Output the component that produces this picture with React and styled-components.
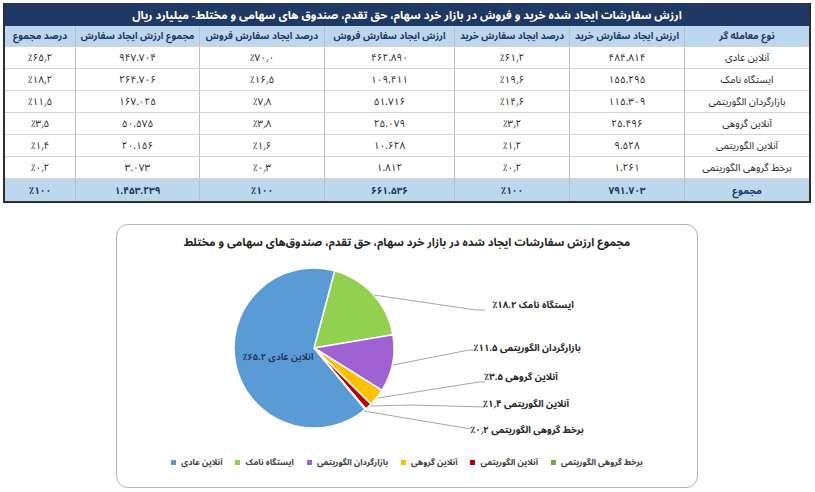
import React from "react";
import styled, { createGlobalStyle } from "styled-components";

const GlobalStyle = createGlobalStyle`
  body {
    margin: 0;
    background: #ffffff;
    font-family: "Noto Sans Arabic", "DejaVu Sans", sans-serif;
  }
`;

// Table
const Page = styled.div`
  width: 815px;
  padding: 3px 4px 0 3px;
  box-sizing: border-box;
`;

const Table = styled.div`
  direction: rtl;
  border: 2px solid #2e2e2e;
  border-top: none;
`;

const TitleBar = styled.div`
  height: 23px;
  background: #1f3864;
  color: #ffffff;
  font-size: 11.3px;
  font-weight: bold;
  display: flex;
  align-items: center;
  justify-content: center;
`;

const Row = styled.div`
  display: grid;
  grid-template-columns: 125px 115px 115px 130px 125px 124px 70px;
  height: ${({ $h }) => $h}px;
  box-sizing: border-box;
  background: ${({ $shade }) => ($shade ? "#bdd7ee" : "#ffffff")};
  border-bottom: ${({ $last }) => ($last ? "none" : "1px solid #d4d4d4")};
`;

const Cell = styled.div`
  display: flex;
  align-items: center;
  justify-content: center;
  min-width: 0;
  border-left: 1px solid #bfbfbf;
  font-size: ${({ $head }) => ($head ? "9.6px" : "10px")};
  font-weight: ${({ $bold }) => ($bold ? "bold" : "normal")};
  color: ${({ $bold }) => ($bold ? "#1f3864" : "#262626")};
  white-space: nowrap;

  &:last-child {
    border-left: none;
  }
`;

const Num = styled.bdi`
  display: inline-block;
  direction: ltr;
  unicode-bidi: isolate;
  text-align: center;
`;

// Chart
const ChartBox = styled.div`
  width: 582px;
  height: 264px;
  box-sizing: border-box;
  margin: 21px auto 0;
  border: 1.5px solid #a9b6c5;
  border-radius: 12px;
  display: flex;
  flex-direction: column;
  align-items: center;
`;

const ChartTitle = styled.div`
  margin-top: 9px;
  direction: rtl;
  font-size: 11.2px;
  font-weight: bold;
  line-height: 18px;
  color: #262626;
`;

const Plot = styled.svg`
  display: block;
  margin-top: 3px;
  font-family: "Noto Sans Arabic", "DejaVu Sans", sans-serif;
`;

const Legend = styled.div`
  margin-top: 8px;
  display: flex;
  align-items: center;
  gap: 13px;
  line-height: 14px;
`;

const LegendItem = styled.div`
  display: flex;
  align-items: center;
  gap: 5px;
  font-size: 8.4px;
  font-weight: bold;
  color: #404040;
  direction: rtl;
`;

const Swatch = styled.span`
  width: 5px;
  height: 5px;
  background: ${({ $c }) => $c};
`;

const header = [
  "نوع معامله گر",
  "ارزش ایجاد سفارش خرید",
  "درصد ایجاد سفارش خرید",
  "ارزش ایجاد سفارش فروش",
  "درصد ایجاد سفارش فروش",
  "مجموع ارزش ایجاد سفارش",
  "درصد مجموع",
];

const rows = [
  ["آنلاین عادی", "۴۸۴.۸۱۴", "٪۶۱٫۲", "۴۶۲.۸۹۰", "٪۷۰٫۰", "۹۴۷.۷۰۴", "٪۶۵٫۲"],
  ["ایستگاه نامک", "۱۵۵.۲۹۵", "٪۱۹٫۶", "۱۰۹.۴۱۱", "٪۱۶٫۵", "۲۶۴.۷۰۶", "٪۱۸٫۲"],
  ["بازارگردان الگوریتمی", "۱۱۵.۳۰۹", "٪۱۴٫۶", "۵۱.۷۱۶", "٪۷٫۸", "۱۶۷.۰۲۵", "٪۱۱٫۵"],
  ["آنلاین گروهی", "۲۵.۴۹۶", "٪۳٫۲", "۲۵.۰۷۹", "٪۳٫۸", "۵۰.۵۷۵", "٪۳٫۵"],
  ["آنلاین الگوریتمی", "۹.۵۲۸", "٪۱٫۲", "۱۰.۶۲۸", "٪۱٫۶", "۲۰.۱۵۶", "٪۱٫۴"],
  ["برخط گروهی الگوریتمی", "۱.۲۶۱", "٪۰٫۲", "۱.۸۱۲", "٪۰٫۳", "۳.۰۷۳", "٪۰٫۲"],
];

const total = ["مجموع", "۷۹۱.۷۰۳", "٪۱۰۰", "۶۶۱.۵۳۶", "٪۱۰۰", "۱.۴۵۳.۲۳۹", "٪۱۰۰"];

// pie slices, clockwise from the green one
const slices = [
  { name: "ایستگاه نامک", pct: 18.2, color: "#92d050" },
  { name: "بازارگردان الگوریتمی", pct: 11.5, color: "#a062d3" },
  { name: "آنلاین گروهی", pct: 3.5, color: "#ffc000" },
  { name: "آنلاین الگوریتمی", pct: 1.4, color: "#c00000" },
  { name: "برخط گروهی الگوریتمی", pct: 0.2, color: "#70ad47" },
  { name: "آنلاین عادی", pct: 65.2, color: "#5b9bd5" },
];

const legend = [
  { name: "آنلاین عادی", color: "#5b9bd5" },
  { name: "ایستگاه نامک", color: "#92d050" },
  { name: "بازارگردان الگوریتمی", color: "#a062d3" },
  { name: "آنلاین گروهی", color: "#ffc000" },
  { name: "آنلاین الگوریتمی", color: "#c00000" },
  { name: "برخط گروهی الگوریتمی", color: "#70ad47" },
];

const labels = [
  { text: "ایستگاه نامک ۱۸.۲٪", x: 532, y: 309, line: "373,296 475,311 484,311" },
  { text: "بازارگردان الگوریتمی ۱۱.۵٪", x: 526, y: 352, line: "392,366 468,351 474,351" },
  { text: "آنلاین گروهی ۳.۵٪", x: 520, y: 381, line: "377,399 478,383 484,383" },
  { text: "آنلاین الگوریتمی ۱٫۴٪", x: 525, y: 408, line: "369,407 410,406 483,408" },
  { text: "برخط گروهی الگوریتمی ۰٫۲٪", x: 526, y: 434, line: "363,412 410,420 470,430" },
];

const CX = 313;
const CY = 349;
const R = 80;

const point = (deg) => {
  const a = (deg * Math.PI) / 180;
  return [CX + R * Math.sin(a), CY - R * Math.cos(a)];
};

const slicePath = (from, to) => {
  const [x0, y0] = point(from);
  const [x1, y1] = point(to);
  const large = to - from > 180 ? 1 : 0;
  return `M${CX},${CY} L${x0},${y0} A${R},${R} 0 ${large} 1 ${x1},${y1} Z`;
};

const PieChart = () => {
  let start = 15;
  return (
    <Plot width="580" height="192" viewBox="116 256 580 192">
      {slices.map((s) => {
        const end = start + (s.pct / 100) * 360;
        const d = slicePath(start, end);
        start = end;
        return <path key={s.name} d={d} fill={s.color} stroke="#ffffff" strokeWidth="1.5" />;
      })}
      {labels.map((l) => (
        <g key={l.text}>
          <polyline points={l.line} fill="none" stroke="#a6a6a6" strokeWidth="1" />
          <text
            x={l.x}
            y={l.y}
            direction="rtl"
            textAnchor="middle"
            fontSize="9.5"
            fontWeight="bold"
            fill="#262626"
          >
            {l.text}
          </text>
        </g>
      ))}
      <text
        x="277"
        y="361"
        direction="rtl"
        textAnchor="middle"
        fontSize="9.2"
        fontWeight="bold"
        fill="#1f3864"
      >
        آنلاین عادی ۶۵.۲٪
      </text>
    </Plot>
  );
};

const App = () => {
  return (
    <Page>
      <GlobalStyle />
      <Table>
        <TitleBar>
          ارزش سفارشات ایجاد شده خرید و فروش در بازار خرد سهام، حق تقدم، صندوق های سهامی و مختلط- میلیارد ریال
        </TitleBar>
        <Row $h={21} $shade>
          {header.map((h) => (
            <Cell key={h} $bold $head>
              {h}
            </Cell>
          ))}
        </Row>
        {rows.map((r) => (
          <Row key={r[0]} $h={22}>
            {r.map((v, i) => (
              <Cell key={i}>{i > 0 ? <Num>{v}</Num> : v}</Cell>
            ))}
          </Row>
        ))}
        <Row $h={22} $shade $last>
          {total.map((v, i) => (
            <Cell key={i} $bold>
              {i > 0 ? <Num>{v}</Num> : v}
            </Cell>
          ))}
        </Row>
      </Table>

      <ChartBox>
        <ChartTitle>
          مجموع ارزش سفارشات ایجاد شده در بازار خرد سهام، حق تقدم، صندوق‌های سهامی و مختلط
        </ChartTitle>
        <PieChart />
        <Legend>
          {legend.map((l) => (
            <LegendItem key={l.name}>
              <span>{l.name}</span>
              <Swatch $c={l.color} />
            </LegendItem>
          ))}
        </Legend>
      </ChartBox>
    </Page>
  );
};

export default App;
